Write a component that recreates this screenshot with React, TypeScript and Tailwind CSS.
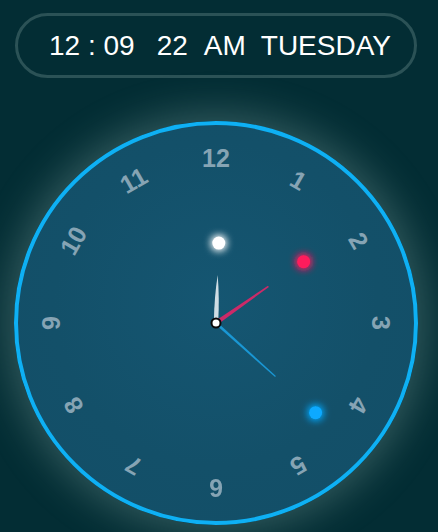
import React from "react";

const NUMBERS = [12, 1, 2, 3, 4, 5, 6, 7, 8, 9, 10, 11];

// 12:09:22 fixed
const HOUR_DEG = 2;
const MIN_DEG = 55;
const SEC_DEG = 132;

function polar(r: number, deg: number) {
  const a = (deg * Math.PI) / 180;
  return { x: 200 + r * Math.sin(a), y: 200 - r * Math.cos(a) };
}

function Hands() {
  const h = polar(80, HOUR_DEG);
  const m = polar(107, MIN_DEG);
  const s = polar(134, SEC_DEG);
  return (
    <svg className="absolute inset-0" width="400" height="400" viewBox="0 0 400 400">
      <defs>
        <filter id="glow" x="-200%" y="-200%" width="500%" height="500%">
          <feGaussianBlur stdDeviation="4" result="b" />
          <feMerge>
            <feMergeNode in="b" />
            <feMergeNode in="b" />
            <feMergeNode in="SourceGraphic" />
          </feMerge>
        </filter>
      </defs>

      {/* dots */}
      <circle cx={h.x} cy={h.y} r="6.5" fill="#ffffff" filter="url(#glow)" />
      <circle cx={m.x} cy={m.y} r="6.5" fill="#ff1f5c" filter="url(#glow)" />
      <circle cx={s.x} cy={s.y} r="6.5" fill="#0aa9ff" filter="url(#glow)" />

      {/* second */}
      <g transform={`rotate(${SEC_DEG} 200 200)`}>
        <path d="M198.6 200 L201.4 200 L200.6 120 L199.4 120 Z" fill="#1a97d4" />
      </g>
      {/* minute */}
      <g transform={`rotate(${MIN_DEG} 200 200)`}>
        <path d="M197.8 200 L202.2 200 L200.8 136 L199.2 136 Z" fill="#cc2a68" />
      </g>
      {/* hour */}
      <g transform={`rotate(${HOUR_DEG} 200 200)`}>
        <path d="M197.8 198 Q197.4 174 200 152 Q202.6 174 202.2 198 Z" fill="#cfdde4" />
      </g>

      <circle cx="200" cy="200" r="4.5" fill="#ffffff" stroke="#0a0a0a" strokeWidth="2" />
    </svg>
  );
}

export default function App() {
  return (
    <div
      className="min-h-[532px] w-full overflow-hidden bg-[#032d34] pt-[13px] text-white"
      style={{ fontFamily: '"Liberation Sans", Arial, sans-serif' }}
    >
      <div className="ml-[15px] flex h-[65px] w-[402px] items-center rounded-full border-[3px] border-[#2b5256] pl-[31px] text-[28px] leading-none">
        <span>12 : 09</span>
        <span className="ml-[22px]">22</span>
        <span className="ml-[16px]">AM</span>
        <span className="ml-[15px]">TUESDAY</span>
      </div>

      <div className="ml-[14px] mt-[43px] h-[404px] w-[404px] rounded-full border-[4px] border-[#0eb0f4] bg-[radial-gradient(circle_at_50%_45%,#155672_0%,#135069_55%,#134e67_100%)] shadow-[0_0_40px_8px_rgba(190,225,215,0.26)]">
        <div className="relative h-full w-full">
          {NUMBERS.map((n, i) => (
            <div
              key={n}
              className="absolute left-[198px] top-[198px] h-0 w-0"
              style={{ transform: `rotate(${i * 30}deg)` }}
            >
              <span className="absolute left-[-30px] top-[-179px] w-[60px] text-center text-[25px] font-bold leading-[28px] text-[#86a4b4]">
                {n}
              </span>
            </div>
          ))}
          <div className="absolute left-[-2px] top-[-2px]">
            <Hands />
          </div>
        </div>
      </div>
    </div>
  );
}
